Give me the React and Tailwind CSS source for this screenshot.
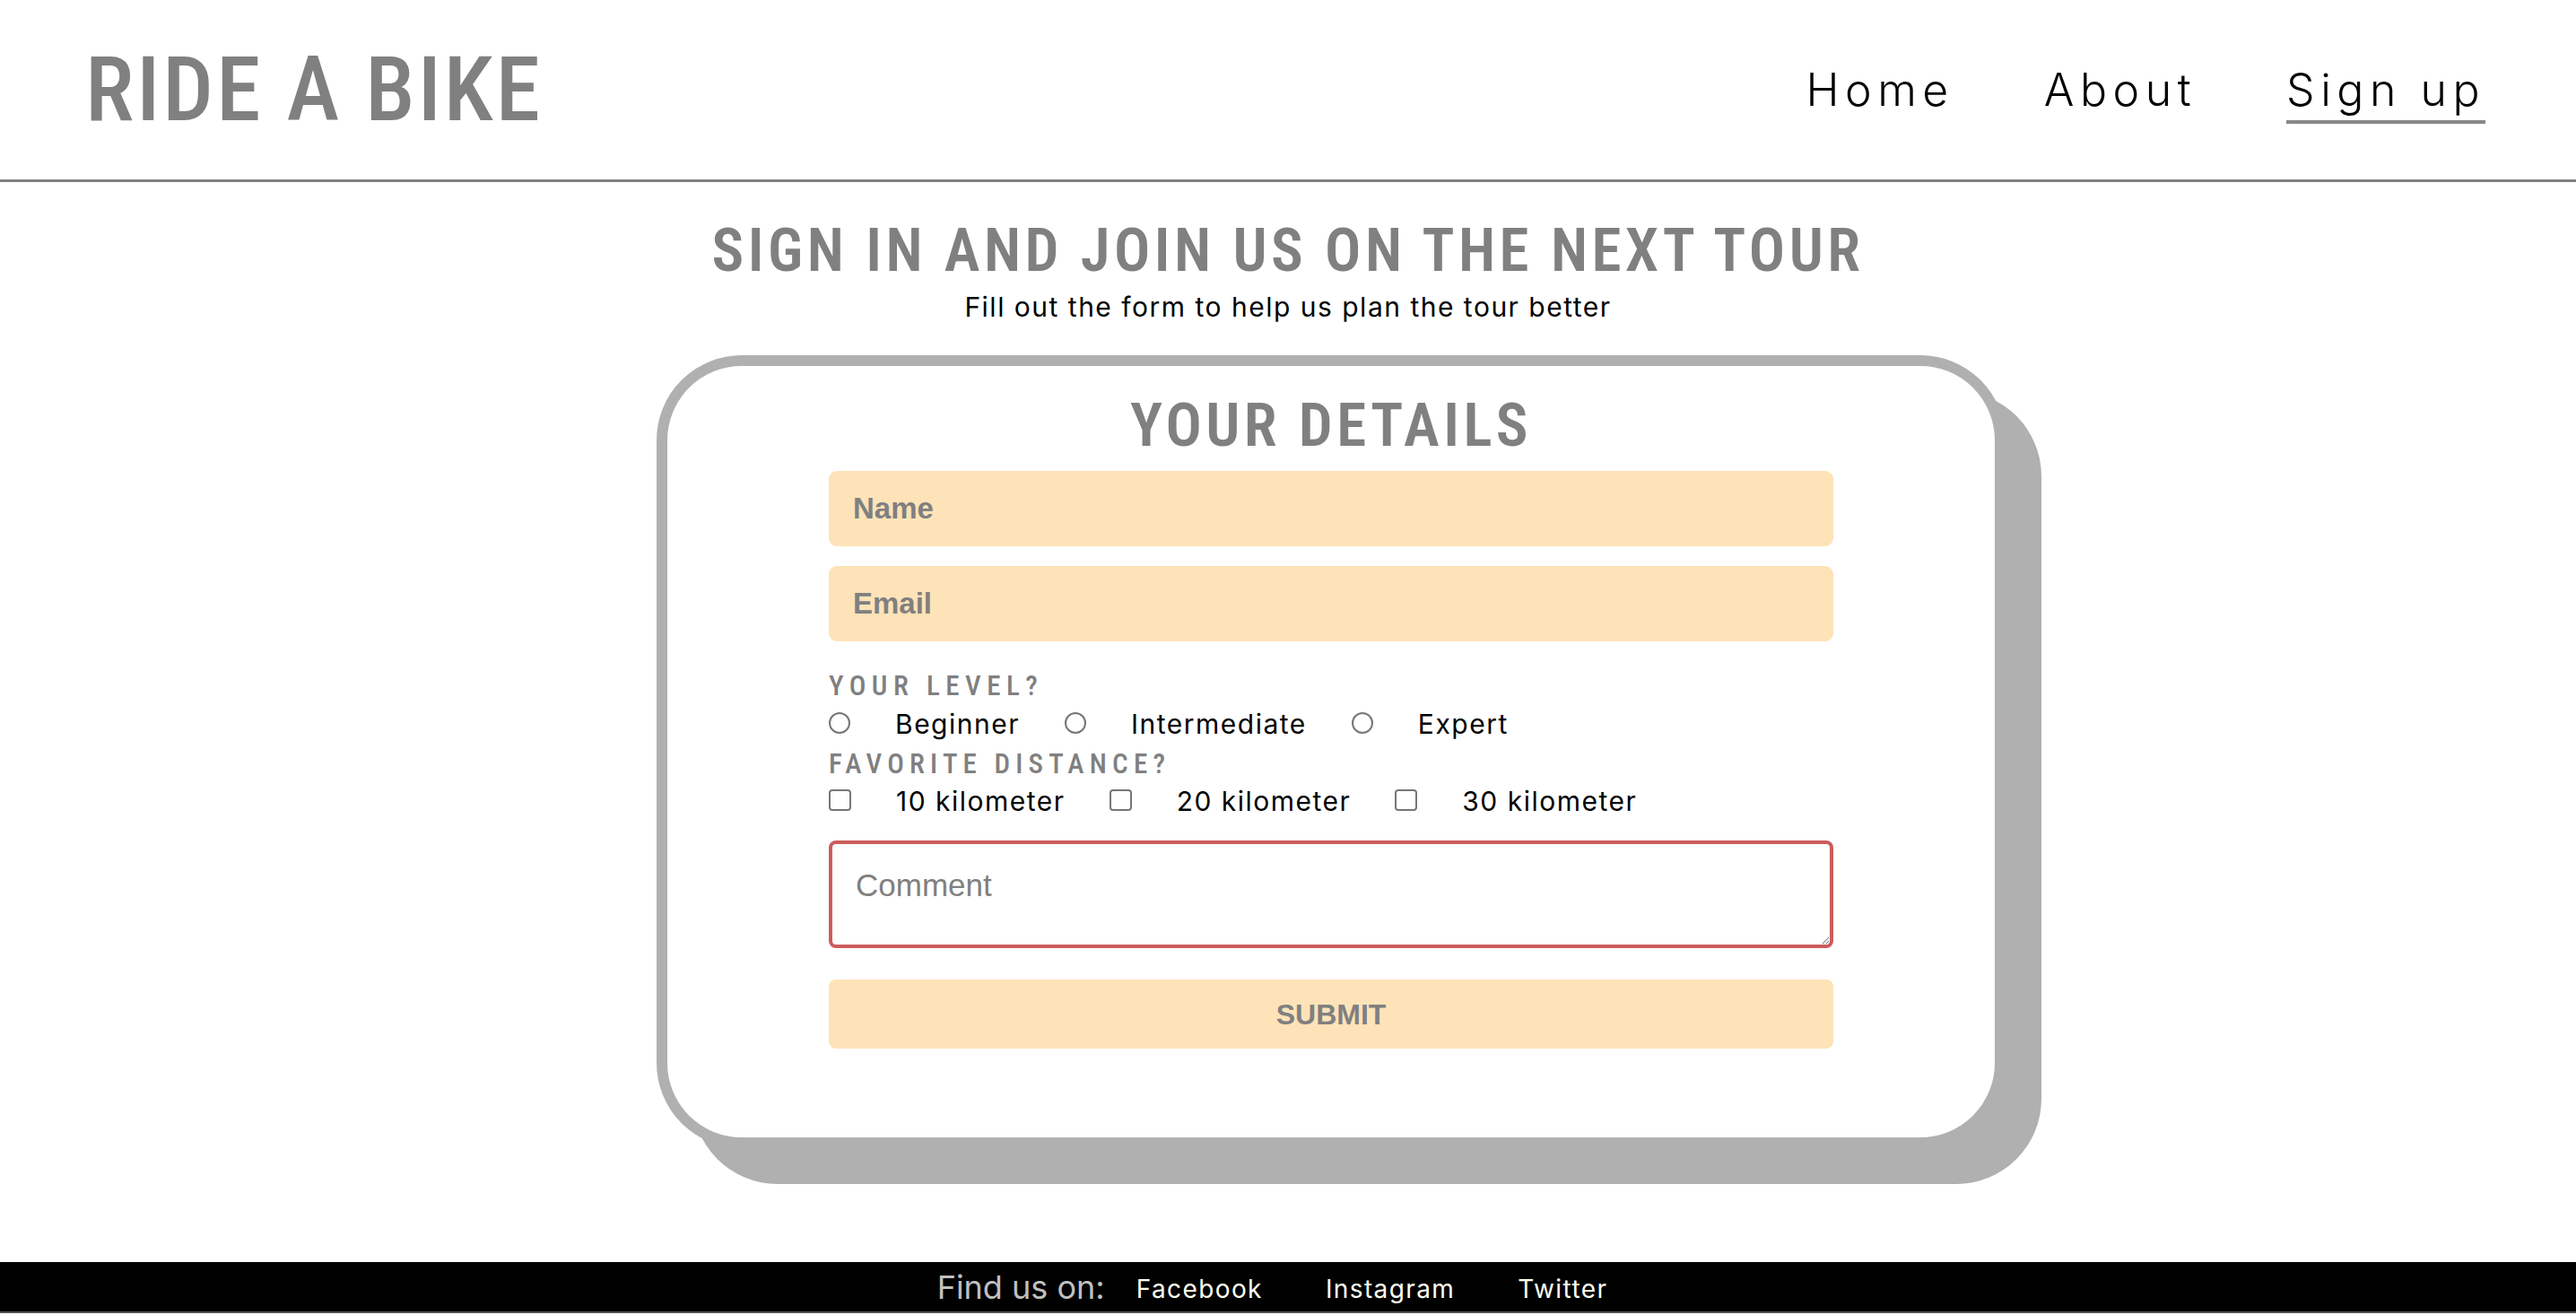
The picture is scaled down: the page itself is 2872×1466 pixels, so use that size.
const cond = "font-['Roboto_Condensed','Liberation_Sans_Narrow','DejaVu_Sans_Condensed',Roboto,sans-serif] font-stretch-condensed";
const arial = "font-['Liberation_Sans',Arial,sans-serif]";

function Radio({ label, name }) {
  return (
    <>
      <input type="radio" name={name} className="appearance-none m-0 -mt-[3px] w-[24px] h-[24px] rounded-full border-2 border-[#767676] bg-white shrink-0" />
      <label className="ml-[50px] mr-[50px]">{label}</label>
    </>
  );
}

function Check({ label }) {
  return (
    <>
      <input type="checkbox" className="appearance-none m-0 -mt-[2px] w-[25px] h-[24px] rounded-[4px] border-2 border-[#767676] bg-white shrink-0" />
      <label className="ml-[50px] mr-[49px]">{label}</label>
    </>
  );
}

export default function App() {
  return (
    <div className="min-h-screen bg-white text-black font-['Inter','Lato',sans-serif]">
      {/* header */}
      <header className="h-[203px] border-b-[3px] border-[#808080] flex items-center justify-between pl-[95px] pr-[101px]">
        <h1 className={`${cond} text-[100px] leading-[100px] font-medium text-[#808080] tracking-[0.03em]`}>RIDE A BIKE</h1>
        <nav className="flex gap-[100px] text-[50px] leading-[48px] font-light tracking-[0.13em]">
          <a className="pt-[14px] pb-[10px] border-b-4 border-transparent">Home</a>
          <a className="pt-[14px] pb-[10px] border-b-4 border-transparent">About</a>
          <a className="pt-[14px] pb-[10px] border-b-4 border-[#888888]">Sign up</a>
        </nav>
      </header>

      <main>
        <h2 className={`${cond} mt-[43px] text-center text-[67px] leading-[67px] font-semibold text-[#808080] tracking-[0.066em]`}>
          SIGN IN AND JOIN US ON THE NEXT TOUR
        </h2>
        <p className="mt-[11px] text-center text-[30px] leading-[36px] tracking-[0.05em]">Fill out the form to help us plan the tour better</p>

        {/* card */}
        <form className="mt-[36px] ml-[732px] w-[1504px] bg-white border-[12px] border-[#b0b0b0] rounded-[95px] shadow-[40px_40px_0_#b0b0b0] pt-[33px] pb-[99px] px-[180px]">
          <h3 className={`${cond} text-center text-[67px] leading-[67px] font-semibold text-[#808080] tracking-[0.066em]`}>YOUR DETAILS</h3>

          <input placeholder="Name" className={`${arial} mt-[17px] block w-full h-[84px] rounded-[9px] bg-[#fee3b8] pl-[27px] text-[33px] font-bold placeholder:text-[#808080] outline-none`} />
          <input placeholder="Email" className={`${arial} mt-[22px] block w-full h-[84px] rounded-[9px] bg-[#fee3b8] pl-[27px] text-[33px] font-bold placeholder:text-[#808080] outline-none`} />

          <div className={`${cond} mt-[34px] text-[31px] leading-[31px] font-medium text-[#808080] tracking-[0.21em]`}>YOUR LEVEL?</div>
          <div className="mt-[9px] flex items-center text-[30px] leading-[36px] tracking-[0.05em]">
            <Radio name="level" label="Beginner" />
            <Radio name="level" label="Intermediate" />
            <Radio name="level" label="Expert" />
          </div>

          <div className={`${cond} mt-[11px] text-[31px] leading-[31px] font-medium text-[#808080] tracking-[0.2em]`}>FAVORITE DISTANCE?</div>
          <div className="mt-[8px] flex items-center text-[30px] leading-[36px] tracking-[0.05em]">
            <Check label="10 kilometer" />
            <Check label="20 kilometer" />
            <Check label="30 kilometer" />
          </div>

          <textarea placeholder="Comment" className={`${arial} mt-[26px] block w-full h-[120px] border-4 border-[#cd5c5c] rounded-[8px] px-[26px] pt-[20px] text-[35px] placeholder:text-[#808080] outline-none`} />

          <button type="button" className={`${arial} mt-[35px] block w-full h-[77px] rounded-[8px] bg-[#fee3b8] text-[32px] font-bold text-[#808080]`}>SUBMIT</button>
        </form>
      </main>

      <footer className="mt-[127px] h-[57px] bg-black border-b-2 border-[#555555] flex items-center justify-center">
        <span className="text-[36px] leading-[40px] text-[#c0c0c0]">Find us on:</span>
        <a className="px-[35px] text-[28px] leading-[40px] tracking-[0.05em] text-[#fffff0] pt-[4px]">Facebook</a>
        <a className="px-[35px] text-[28px] leading-[40px] tracking-[0.05em] text-[#fffff0] pt-[4px]">Instagram</a>
        <a className="px-[35px] text-[28px] leading-[40px] tracking-[0.05em] text-[#fffff0] pt-[4px]">Twitter</a>
      </footer>
    </div>
  );
}
